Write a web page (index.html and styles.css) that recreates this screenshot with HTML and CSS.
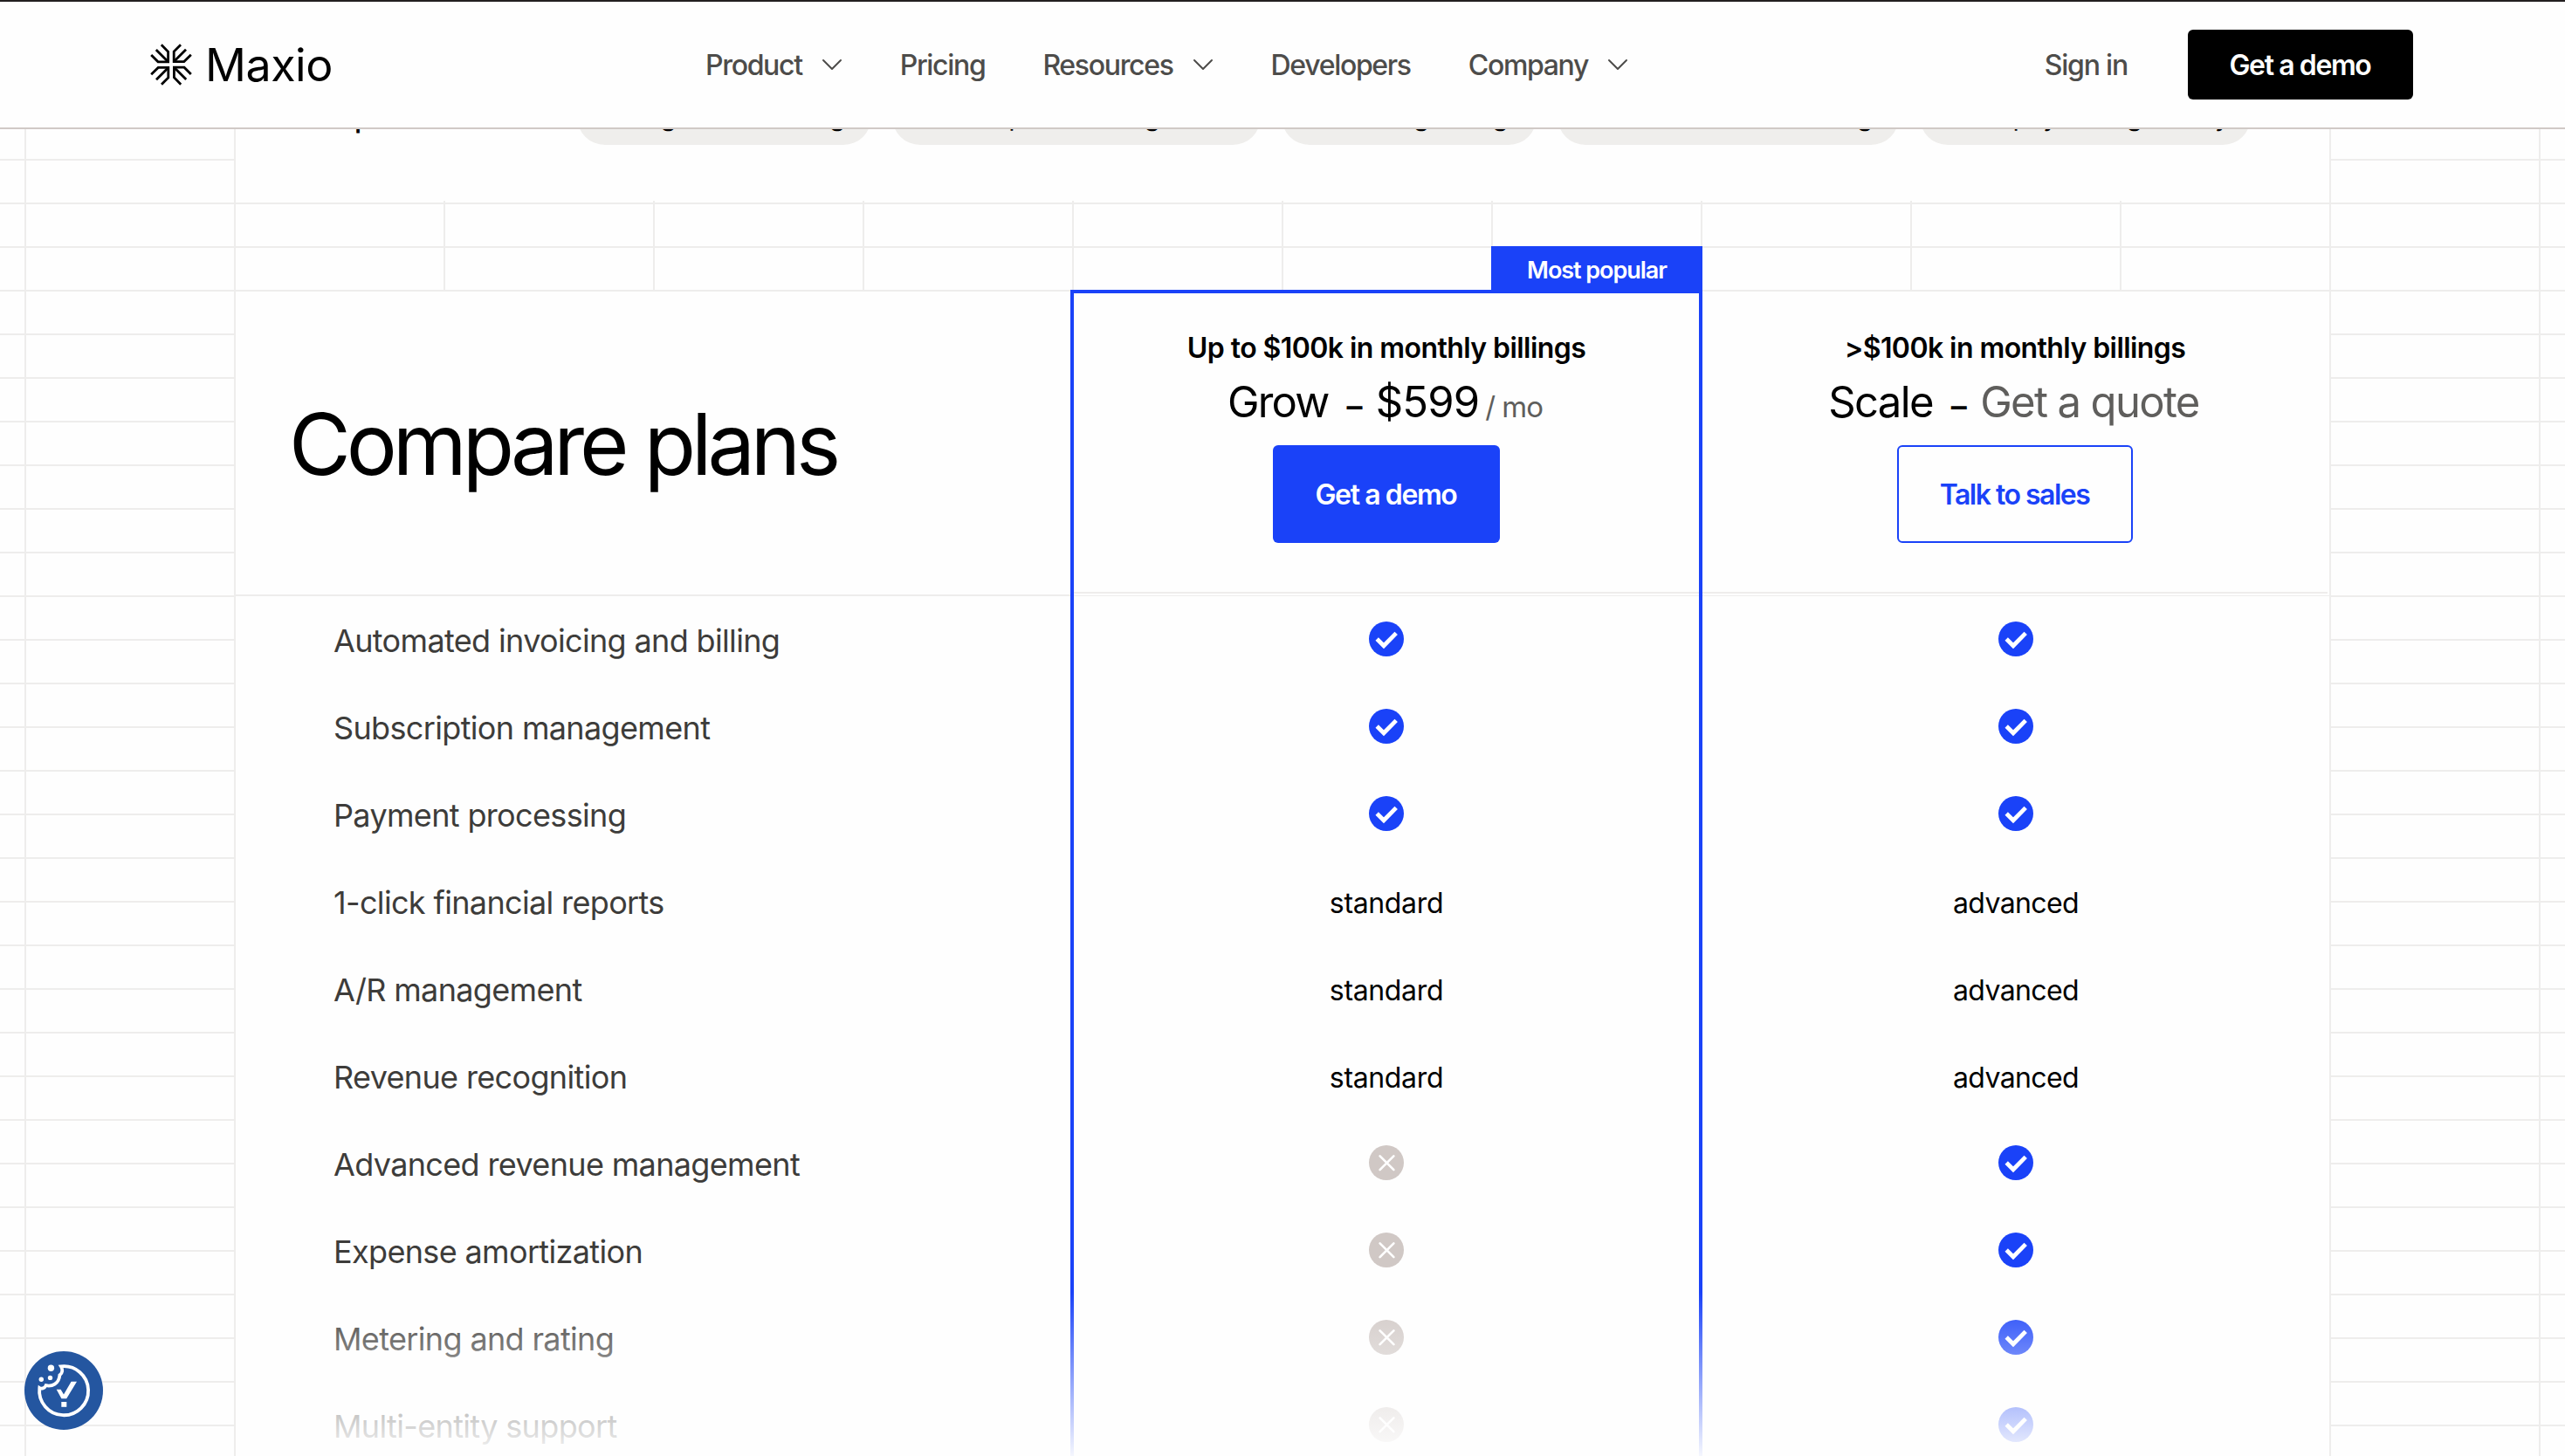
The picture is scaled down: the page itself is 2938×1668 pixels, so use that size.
FILE: index.html
```html
<!DOCTYPE html>
<html lang="en">
<head>
    <meta charset="UTF-8" />
    <meta name="viewport" content="width=device-width, initial-scale=1" />
    <title>Pricing | Maxio</title>
    <link rel="stylesheet" href="styles.css">
</head>
<body>

<!-- Shared icons -->
<svg class="sprite" aria-hidden="true">
    <symbol id="chevron" viewBox="0 0 24 14">
        <path d="M2 2 L12 12 L22 2" fill="none" stroke="currentColor" stroke-width="2" stroke-linecap="round" stroke-linejoin="round" />
    </symbol>
    <symbol id="yes" viewBox="0 0 40 40">
        <circle cx="20" cy="20" r="20" fill="#1a42f8" />
        <path d="M9.2 20 L17 27.8 L31.2 13.4" fill="none" stroke="#fff" stroke-width="4.8" />
    </symbol>
    <symbol id="no" viewBox="0 0 40 40">
        <circle cx="20" cy="20" r="20" fill="#d0c8c5" />
        <path d="M12.6 12.4 L28.4 28.2 M28.4 12.4 L12.6 28.2" fill="none" stroke="#fff" stroke-width="2.6" stroke-linecap="round" />
    </symbol>
</svg>

<header class="header">
    <a class="logo" href="#">
        <svg class="logo-mark" viewBox="0 0 48 48">
            <g id="leaf" fill="none" stroke="#000" stroke-width="2.8">
                <path d="M35 1.2 L27.2 9 V20.6 H38.8 L46.8 12.8" />
                <path d="M41 6.8 L27 20.8" />
            </g>
            <use href="#leaf" transform="rotate(90 24 24)" />
            <use href="#leaf" transform="rotate(180 24 24)" />
            <use href="#leaf" transform="rotate(270 24 24)" />
        </svg>
        <span>Maxio</span>
    </a>
    <nav class="nav">
        <a href="#">Product <svg class="chevron"><use href="#chevron" /></svg></a>
        <a href="#">Pricing</a>
        <a href="#">Resources <svg class="chevron"><use href="#chevron" /></svg></a>
        <a href="#">Developers</a>
        <a href="#">Company <svg class="chevron"><use href="#chevron" /></svg></a>
    </nav>
    <a class="sign-in" href="#">Sign in</a>
    <a class="btn btn-black" href="#">Get a demo</a>
</header>

<main>
    <section class="features">
        <div class="features-label">Compare</div>
        <div class="pills">
            <span>Billing and invoicing</span>
            <span>Subscription management</span>
            <span>Recurring billing</span>
            <span>Financial data modeling</span>
            <span>Multi-payment gateway</span>
        </div>
    </section>

    <section class="plans">
        <div class="col col-names">
            <div class="col-head"><h2>Compare plans</h2></div>
            <div class="col-body">
                <div class="cell">Automated invoicing and billing</div>
                <div class="cell">Subscription management</div>
                <div class="cell">Payment processing</div>
                <div class="cell">1-click financial reports</div>
                <div class="cell">A/R management</div>
                <div class="cell">Revenue recognition</div>
                <div class="cell">Advanced revenue management</div>
                <div class="cell">Expense amortization</div>
                <div class="cell">Metering and rating</div>
                <div class="cell">Multi-entity support</div>
            </div>
        </div>

        <div class="col col-plan popular">
            <div class="tag">Most popular</div>
            <div class="col-head">
                <p class="limit">Up to $100k in monthly billings</p>
                <p class="price"><span>Grow</span><span class="dash">–</span><span class="amount">$599</span><small>/ mo</small></p>
                <a class="btn btn-blue" href="#">Get a demo</a>
            </div>
            <div class="col-body">
                <div class="cell"><svg class="mark"><use href="#yes" /></svg></div>
                <div class="cell"><svg class="mark"><use href="#yes" /></svg></div>
                <div class="cell"><svg class="mark"><use href="#yes" /></svg></div>
                <div class="cell">standard</div>
                <div class="cell">standard</div>
                <div class="cell">standard</div>
                <div class="cell"><svg class="mark"><use href="#no" /></svg></div>
                <div class="cell"><svg class="mark"><use href="#no" /></svg></div>
                <div class="cell"><svg class="mark"><use href="#no" /></svg></div>
                <div class="cell"><svg class="mark"><use href="#no" /></svg></div>
            </div>
        </div>

        <div class="col col-plan scale">
            <div class="col-head">
                <p class="limit">&gt;$100k in monthly billings</p>
                <p class="price"><span>Scale</span><span class="dash">–</span><span class="quote">Get a quote</span></p>
                <a class="btn btn-outline" href="#">Talk to sales</a>
            </div>
            <div class="col-body">
                <div class="cell"><svg class="mark"><use href="#yes" /></svg></div>
                <div class="cell"><svg class="mark"><use href="#yes" /></svg></div>
                <div class="cell"><svg class="mark"><use href="#yes" /></svg></div>
                <div class="cell">advanced</div>
                <div class="cell">advanced</div>
                <div class="cell">advanced</div>
                <div class="cell"><svg class="mark"><use href="#yes" /></svg></div>
                <div class="cell"><svg class="mark"><use href="#yes" /></svg></div>
                <div class="cell"><svg class="mark"><use href="#yes" /></svg></div>
                <div class="cell"><svg class="mark"><use href="#yes" /></svg></div>
            </div>
        </div>

        <div class="fade"></div>
    </section>
</main>

<button class="cookie" aria-label="Cookie settings">
    <svg viewBox="0 0 90 90">
        <path d="M42 17.4 A28 28 0 1 1 17.3 42 C19.5 43.4 23 42.6 24.6 39.2 C31.5 40.6 39.5 37.5 40.4 27.4 C43.6 25.2 44.2 20.6 42 17.4 Z" fill="none" stroke="#fff" stroke-width="3.8" />
        <circle cx="30.4" cy="19.2" r="3.7" fill="#fff" />
        <circle cx="19.3" cy="32.2" r="2.7" fill="#fff" />
        <circle cx="29.5" cy="30.4" r="2.7" fill="#fff" />
        <path d="M36.7 43.7 H41.6 L45 49.6 L53.6 34.7 H60 L48.2 54.3 H42.4 Z" fill="#fff" />
        <rect x="42.3" y="58" width="6" height="5.8" fill="#fff" />
    </svg>
</button>

</body>
</html>
```
FILE: styles.css
```css
* {
    box-sizing: border-box;
}
body {
    margin: 0;
    height: 1668px;
    overflow: hidden;
    font-family: 'Inter', 'Liberation Sans', sans-serif;
    font-size: 32px;
    color: #000;
    background-color: #fefefe;
    background-image:
        linear-gradient(to right, #eeedec 2px, transparent 2px),
        linear-gradient(to bottom, #eeedec 2px, transparent 2px);
    background-size: 240px 50px;
    background-position: 28px 32px;
}
a {
    color: inherit;
    text-decoration: none;
}
h2, p {
    margin: 0;
    font-weight: 400;
}
.sprite {
    display: none;
}

/* Header */
.header {
    position: fixed;
    top: 0;
    left: 0;
    right: 0;
    z-index: 10;
    height: 148px;
    padding: 0 174px 0 172px;
    display: flex;
    align-items: center;
    background: #fefefe;
    border-top: 2px solid #231f20;
    border-bottom: 2px solid #d0c9c6;
    color: #4d4c4a;
    font-weight: 500;
    letter-spacing: -1.2px;
}
.logo {
    display: flex;
    align-items: center;
    gap: 15px;
    width: 636px;
    color: #000;
    font-size: 52px;
    font-weight: 400;
    letter-spacing: -0.5px;
}
.logo-mark {
    width: 48px;
    height: 48px;
}
.nav {
    display: flex;
    gap: 66px;
    letter-spacing: -1.33px;
}
.nav a {
    display: flex;
    align-items: center;
    gap: 22px;
}
.chevron {
    width: 24px;
    height: 14px;
}
.sign-in {
    margin-left: auto;
    margin-right: 69px;
}

/* Buttons */
.btn {
    display: flex;
    align-items: center;
    justify-content: center;
    height: 112px;
    padding-right: 1px;
    border-radius: 6px;
    font-weight: 600;
    letter-spacing: -1.4px;
}
.btn-black {
    width: 258px;
    height: 80px;
    background: #000;
    color: #fff;
}
.btn-blue {
    width: 260px;
    background: #1a42f8;
    color: #fff;
}
.btn-outline {
    width: 270px;
    border: 2px solid #1a42f8;
    color: #1a42f8;
    letter-spacing: -1.5px;
}

/* Feature pills */
main {
    padding: 102px 270px 0;
}
.features {
    display: flex;
    height: 128px;
    padding-left: 60px;
    background: #fefefe;
}
.features-label {
    width: 331px;
    line-height: 64px;
    font-size: 34px;
    font-weight: 500;
}
.pills {
    display: grid;
    grid-template-columns: 337px 422px 292px 391px 379px;
    grid-auto-rows: 64px;
    gap: 24px;
}
.pills span {
    border-radius: 32px;
    background: #efeeec;
    font-size: 30px;
    line-height: 63px;
    text-align: center;
    letter-spacing: -0.2px;
    white-space: nowrap;
}

/* Plans table */
.plans {
    position: relative;
    display: flex;
    width: 2398px;
    margin-top: 104px;
}
.col-names {
    width: 956px;
}
.col-names .col-head {
    display: flex;
    align-items: center;
    height: 349px;
    padding: 2px 0 0 61px;
    border-bottom: 2px solid #eeedec;
    background: #fefefe;
}
h2 {
    font-size: 97px;
    letter-spacing: -5.1px;
}
.col-body {
    padding-top: 1px;
    background: #fefefe;
}
.cell {
    display: flex;
    align-items: center;
    height: 100px;
}
.col-names .cell {
    padding-left: 112px;
    font-size: 36px;
    letter-spacing: -0.65px;
    color: #3d3c3a;
}
.col-plan .col-head {
    display: flex;
    flex-direction: column;
    align-items: center;
    height: 346px;
    padding-top: 41px;
    border-bottom: 2px solid #eeedec;
    background: #fefefe;
}
.col-plan .col-body {
    margin-top: 2px;
    border-top: 1px solid #eeedec;
    box-shadow: 0 -2px 0 #fefefe;
}
.col-plan .cell {
    justify-content: center;
    letter-spacing: -0.35px;
}
.popular {
    position: relative;
    width: 724px;
    margin-top: -2px;
    border: 4px solid #1a42f8;
    border-bottom: none;
}
.popular .col-head {
    height: 344px;
    padding-top: 39px;
}
.scale {
    width: 718px;
}
.scale .col-head {
    margin-right: 2px;
    box-shadow: 2px 0 0 #fefefe;
}
.scale .cell {
    letter-spacing: -0.6px;
}
.tag {
    position: absolute;
    top: -54px;
    right: -4px;
    width: 242px;
    height: 54px;
    background: #1a42f8;
    color: #fff;
    font-size: 27px;
    font-weight: 600;
    letter-spacing: -1.05px;
    line-height: 55px;
    text-align: center;
}
.limit {
    margin-bottom: 6px;
    font-weight: 600;
    line-height: 48px;
    letter-spacing: -0.57px;
}
.price {
    display: flex;
    align-items: baseline;
    height: 64px;
    margin-bottom: 17px;
    padding-right: 3px;
    font-size: 49px;
    line-height: 64px;
    letter-spacing: -1.8px;
}
.dash {
    margin: 0 17px 0 21px;
    font-size: 36px;
    font-weight: 600;
    line-height: 1;
}
.amount {
    letter-spacing: -0.9px;
}
.price small {
    margin-left: 7px;
    font-size: 33px;
    line-height: 1;
    letter-spacing: -1px;
    color: #5f5e5c;
}
.quote {
    color: #5f5e5c;
}
.scale .price {
    letter-spacing: -1.65px;
}
.mark {
    width: 40px;
    height: 40px;
    margin-bottom: 4px;
}
.fade {
    position: absolute;
    left: 0;
    right: 0;
    top: 1146px;
    height: 196px;
    background: linear-gradient(to bottom, rgba(254, 254, 254, 0), #fefefe);
}

/* Cookie settings button */
.cookie {
    position: fixed;
    left: 28px;
    bottom: 30px;
    width: 90px;
    height: 90px;
    padding: 0;
    border: none;
    border-radius: 50%;
    background: #2456a0;
}
.cookie svg {
    display: block;
}
```
